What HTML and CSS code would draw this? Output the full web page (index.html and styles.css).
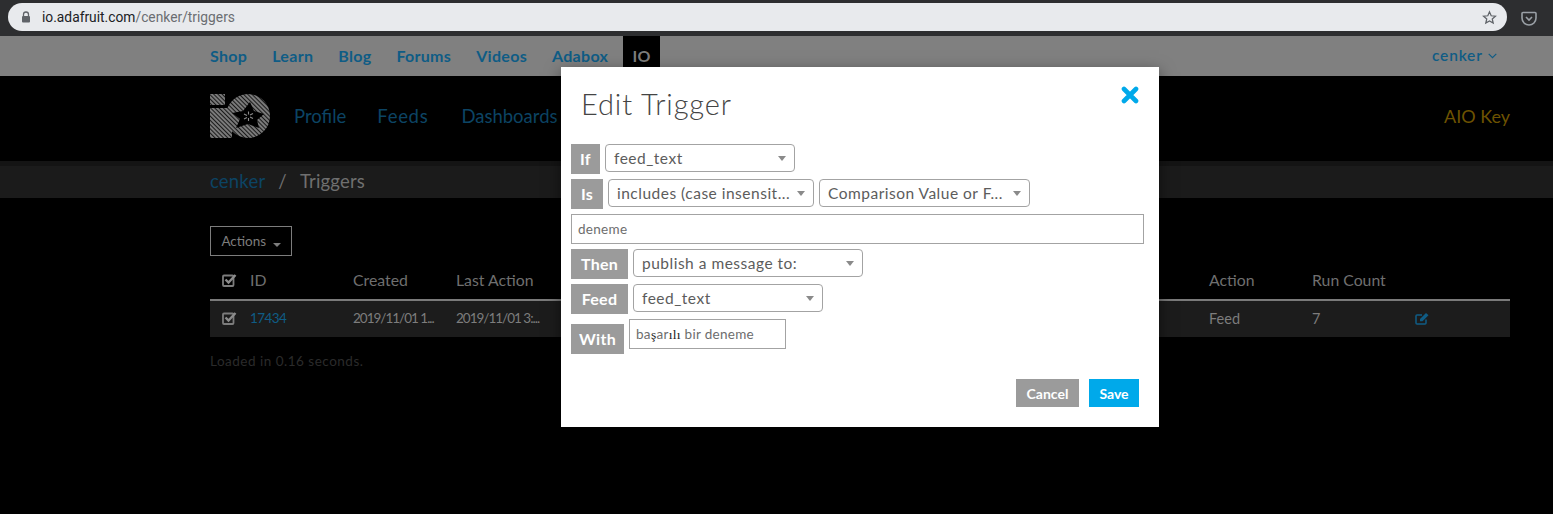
FILE: index.html
```html
<!DOCTYPE html>
<html lang="en">
<head>
<meta charset="utf-8">
<title>Triggers</title>
<link rel="stylesheet" href="styles.css">
</head>
<body>
<div class="chrome">
  <div class="urlbar">
    <svg class="lock" width="10" height="12" viewBox="0 0 10 12"><path d="M2.500 5V3.500a2.500 2.500 0 0 1 5 0V5" fill="none" stroke="#5f6368" stroke-width="1.300"/><rect x="1" y="5" width="8" height="6.500" rx="1" fill="#5f6368"/></svg>
    <span class="host">io.adafruit.com</span><span class="path">/cenker/triggers</span>
    <svg class="star" width="15" height="15" viewBox="0 0 24 24"><path d="M12 3l2.700 6.200 6.800.6-5.100 4.500 1.500 6.600L12 17.400l-5.900 3.500 1.500-6.600-5.100-4.500 6.800-.6z" fill="none" stroke="#5f6368" stroke-width="2"/></svg>
  </div>
  <svg class="pocket" width="16" height="15" viewBox="0 0 16 15"><path d="M1 2.500a1 1 0 0 1 1-1h12a1 1 0 0 1 1 1V7a7 7 0 0 1-14 0z" fill="none" stroke="#9aa0a6" stroke-width="1.600"/><path d="M5 6l3 3 3-3" fill="none" stroke="#9aa0a6" stroke-width="1.600"/></svg>
</div>

<nav class="topnav">
  <div class="wrap topnav-in">
    <a>Shop</a><a>Learn</a><a>Blog</a><a>Forums</a><a>Videos</a><a>Adabox</a><a class="active">IO</a>
    <span class="user">cenker <svg width="9" height="6" viewBox="0 0 9 6"><path d="M.7.8l3.800 3.800L8.300.8" fill="none" stroke="#0f5c85" stroke-width="1.200"/></svg></span>
  </div>
</nav>

<header class="mainhead">
  <div class="wrap mainhead-in">
    <svg class="logo" width="60" height="45" viewBox="0 0 60 45">
      <defs>
        <pattern id="st" width="3" height="3" patternUnits="userSpaceOnUse" patternTransform="rotate(-45)">
          <rect width="3" height="3" fill="#1a1a1a"/><rect width="2" height="3" fill="#7a7a7a"/>
        </pattern>
      </defs>
      <rect x="0" y="0" width="15" height="11" fill="url(#st)"/>
      <rect x="0" y="14" width="22" height="30" fill="url(#st)"/>
      <circle cx="38" cy="22" r="22" fill="url(#st)"/>
      <path d="M40 8L44 17 54 20 47 26 49 34 38 30 26 34 30 25 22 19 33 17z" fill="#000"/>
      <path d="M38.500 17.500v3M38.500 24v3M34 20l3 1.500M40 23l3 1.500M34 25l3-1.500M40 21l3-1.500" stroke="#8a8a8a" stroke-width="1.100"/>
    </svg>
    <a>Profile</a><a class="feeds">Feeds</a><a>Dashboards</a>
    <span class="aio">AIO Key</span>
  </div>
</header>

<div class="crumbs">
  <div class="wrap crumbs-in"><a>cenker</a><i>/</i><span>Triggers</span></div>
</div>

<main class="wrap content">
  <button class="actions">Actions <b class="caret"></b></button>
  <div class="row head">
    <span class="c-check"><svg width="15" height="14" viewBox="0 0 15 14"><use href="#cbx"/></svg></span>
    <span class="c-id">ID</span><span class="c-created">Created</span><span class="c-last">Last Action</span>
    <span class="c-action">Action</span><span class="c-run">Run Count</span><span class="c-edit"></span>
  </div>
  <div class="row body">
    <span class="c-check"><svg width="15" height="14" viewBox="0 0 15 14"><use href="#cbx"/></svg></span>
    <span class="c-id link num">17434</span><span class="c-created num">2019/11/01 1...</span><span class="c-last num">2019/11/01 3:...</span>
    <span class="c-action">Feed</span><span class="c-run">7</span>
    <span class="c-edit"><svg width="14" height="13" viewBox="0 0 14 13"><path d="M11 7.500V11a1 1 0 0 1-1 1H2a1 1 0 0 1-1-1V4a1 1 0 0 1 1-1h5" fill="none" stroke="#0f5c85" stroke-width="1.500"/><path d="M5 7l6-6 2.500 2.300-6 6H5z" fill="#0f5c85"/></svg></span>
  </div>
  <p class="loaded">Loaded in 0.16 seconds.</p>
</main>

<svg class="defs" width="0" height="0"><defs><g id="cbx"><rect x="1" y="2.500" width="10.500" height="10.500" rx="1" fill="none" stroke="#7c7c7c" stroke-width="1.800"/><path d="M3.500 6.500l3 3L13.500 2" fill="none" stroke="#8c8c8c" stroke-width="2.400"/></g></defs></svg>

<section class="modal">
  <div class="modal-head">
    <h1>Edit Trigger</h1>
    <svg class="close" width="18" height="18" viewBox="0 0 18 18"><path d="M3 3l12 12M15 3L3 15" stroke="#00a9ea" stroke-width="4.600" stroke-linecap="round"/></svg>
  </div>
  <div class="line"><span class="tag t-if">If</span><div class="sel s-if">feed_text</div></div>
  <div class="line"><span class="tag t-is">Is</span><div class="sel s-is">includes (case insensit...</div><div class="sel s-cmp">Comparison Value or F...</div></div>
  <div class="field wide">deneme</div>
  <div class="line"><span class="tag t-then">Then</span><div class="sel s-pub">publish a message to:</div></div>
  <div class="line"><span class="tag t-then">Feed</span><div class="sel s-feed">feed_text</div></div>
  <div class="line with"><span class="tag t-with">With</span><div class="field small">ba<span class="alt">ş</span>ar<span class="alt">ılı</span> bir deneme</div></div>
  <div class="buttons"><button class="btn cancel">Cancel</button><button class="btn save">Save</button></div>
</section>
</body>
</html>
```

FILE: styles.css
```css
* { box-sizing: border-box; }
html, body { margin: 0; padding: 0; }
body {
  position: relative;
  width: 1553px;
  height: 514px;
  overflow: hidden;
  background: #000;
  font-family: Lato, "Open Sans", sans-serif;
  color: #7d7d7d;
}
.defs { position: absolute; }
.wrap { width: 1300px; margin-left: 210px; }

.chrome {
  height: 36px;
  background: #2d2e30;
  padding: 3px 0 0 8px;
  display: flex;
  align-items: flex-start;
}
.urlbar {
  width: 1499px;
  height: 28px;
  background: #e8eaed;
  border-radius: 14px;
  display: flex;
  align-items: center;
  padding: 0 10px 0 13px;
  font-family: Roboto, sans-serif;
  font-size: 13.800px;
}
.lock { margin-right: 11px; }
.host { color: #202124; }
.path { color: #6b6e72; }
.star { margin-left: auto; }
.pocket { margin: 8px 0 0 14px; }

.topnav { height: 40px; background: #808080; }
.topnav-in { display: flex; height: 40px; align-items: center; font-size: 16px; font-weight: 700; color: #0f5c85; padding-bottom: 2px; }
.topnav-in a { margin-right: 25px; letter-spacing: .3px; }
.topnav-in a.active {
  align-self: flex-start;
  margin-left: -10px;
  width: 37px;
  height: 40px;
  background: #000;
  color: #7d7d7d;
  text-align: center;
  line-height: 39px;
}
.user { margin-left: auto; margin-right: 13px; font-weight: 600; font-size: 15.500px; letter-spacing: .8px; }
.user svg { vertical-align: 2px; margin-left: 1px; }

.mainhead { height: 85px; background: #000; }
.mainhead-in { display: flex; align-items: center; height: 80px; font-size: 18.500px; color: #0c4464; padding-bottom: 1px; }
.logo { margin-right: 24px; margin-top: 1px; }
.mainhead-in a { margin-right: 32px; }
.mainhead-in a.feeds { margin-left: -1px; margin-right: 33px; letter-spacing: .7px; }
.aio { margin-left: auto; color: #6e5300; font-size: 18px; padding-top: 1px; }

.crumbs { height: 37px; background: #1b1b1b; border-top: 5px solid #141414; }
.crumbs-in { display: flex; align-items: center; height: 29px; font-size: 18.500px; letter-spacing: .2px; color: #6f6f6f; }
.crumbs-in a { color: #0c4464; }
.crumbs-in i { margin: 0 13px; font-style: normal; }

.content { width: 1300px; padding-top: 28px; font-size: 14.500px; }
.actions {
  display: block;
  width: 82px;
  height: 30px;
  padding: 0;
  background: transparent;
  border: 1px solid #7d7d7d;
  font-family: inherit;
  font-size: 13.500px;
  color: #7d7d7d;
}
.caret {
  display: inline-block;
  margin-left: 3px;
  vertical-align: -1px;
  border: 4px solid transparent;
  border-top-color: #7d7d7d;
  border-bottom: 0;
}
.row { display: flex; align-items: center; }
.head { height: 43px; margin-top: 2px; font-size: 15.800px; border-bottom: 2px solid #7a7a7a; padding-top: 2px; color: #6f6f6f; }
.body { height: 36px; background: #1c1c1c; padding-bottom: 2px; }
.c-check { width: 40px; padding-left: 12px; display: flex; }
.c-id { width: 103px; }
.c-created { width: 103px; }
.c-last { width: 753px; }
.c-action { width: 103px; }
.c-run { width: 103px; }
.c-edit { display: flex; }
.link { color: #0f5c85; }
.num { font-size: 13.500px; letter-spacing: -1px; white-space: nowrap; }
.link.num { letter-spacing: -.6px; }
.loaded { margin: 16px 0 0; font-size: 13.500px; letter-spacing: .5px; color: #2b2b2b; }

.modal {
  position: absolute;
  left: 561px;
  top: 67px;
  width: 598px;
  height: 360px;
  background: #fff;
  padding: 0 10px;
  color: #5c5c5c;
  box-shadow: 0 5px 15px rgba(0, 0, 0, .5);
}
.modal-head { height: 77px; position: relative; }
.modal-head h1 { margin: 0; padding: 18px 0 0 10px; font-size: 29px; font-weight: 300; color: #444; letter-spacing: .9px; line-height: 38px; }
.close { position: absolute; right: 10px; top: 19px; }
.line { display: flex; height: 30px; margin-bottom: 5px; }
.tag {
  height: 30px;
  background: #9b9b9b;
  color: #fff;
  font-weight: 700;
  font-size: 16px;
  letter-spacing: .3px;
  line-height: 29px;
  text-align: center;
}
.t-if { width: 29px; }
.t-is { width: 32px; }
.t-then { width: 57px; }
.t-with { width: 53px; }
.sel {
  position: relative;
  height: 28px;
  margin-left: 5px;
  border: 1px solid #a3a3a3;
  border-radius: 4px;
  padding-left: 8px;
  font-size: 15.500px;
  line-height: 26px;
  letter-spacing: .5px;
  white-space: nowrap;
}
.sel::after {
  content: "";
  position: absolute;
  right: 8px;
  top: 11px;
  border: 4px solid transparent;
  border-top: 5px solid #8a8a8a;
  border-bottom: 0;
}
.s-if { width: 190px; }
.s-is { width: 206px; }
.s-cmp { width: 211px; }
.s-pub { width: 230px; }
.s-feed { width: 190px; }
.field {
  border: 1px solid #a3a3a3;
  background: #fff;
  font-size: 13.500px;
  color: #6d6d6d;
  letter-spacing: .3px;
}
.wide { width: 573px; height: 30px; line-height: 28px; padding-left: 6px; margin-bottom: 5px; }
.with { height: 35px; padding-top: 5px; margin-bottom: 0; }
.small { width: 157px; height: 30px; line-height: 28px; padding-left: 6px; margin: -5px 0 0 5px; }
.alt { font-family: "Liberation Serif", serif; color: #222; }
.buttons { display: flex; justify-content: flex-end; gap: 10px; margin: 25px 10px 0 0; }
.btn {
  height: 28px;
  border: 0;
  padding: 0;
  color: #fff;
  font: 700 14px Lato, sans-serif;
}
.cancel { width: 63px; background: #9b9b9b; }
.save { width: 50px; background: #00a9ea; }
```
